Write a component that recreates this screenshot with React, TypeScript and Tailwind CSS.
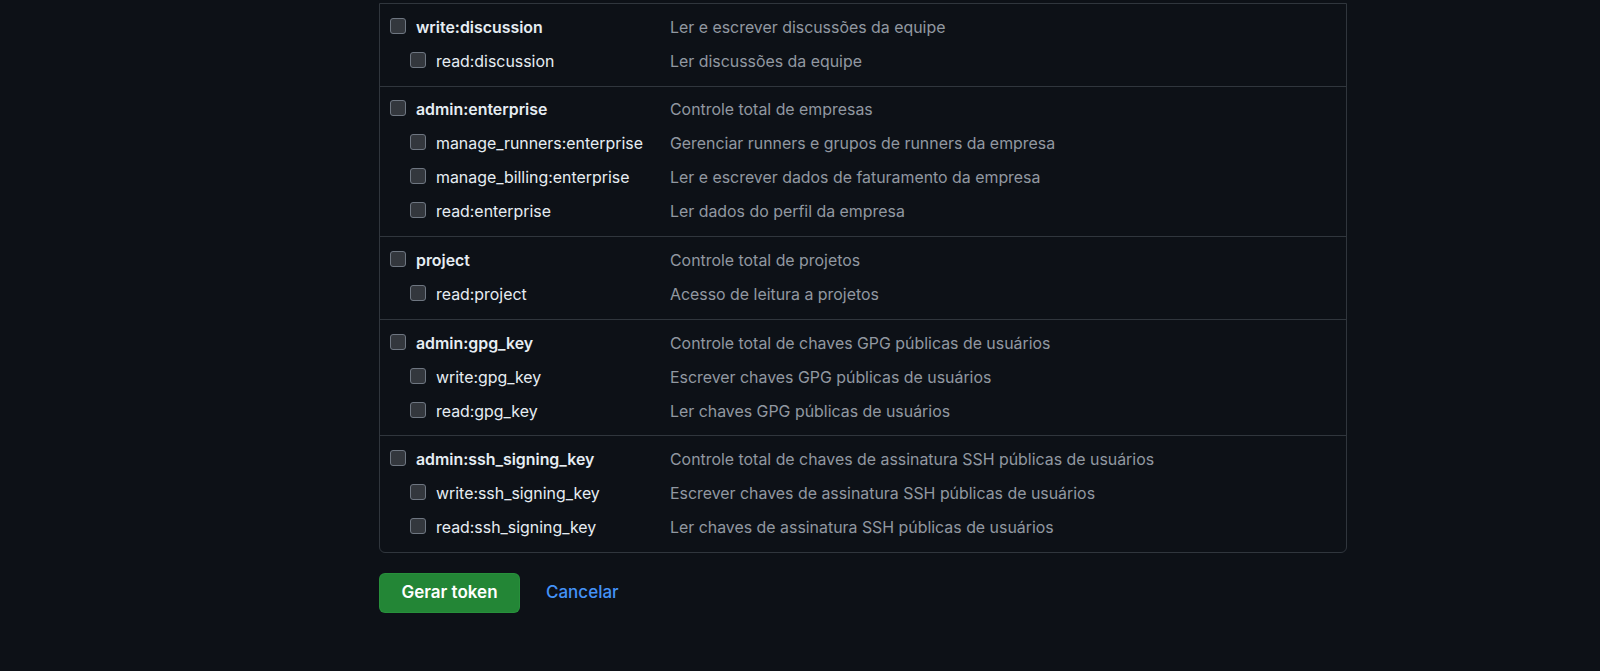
import React from 'react';

type Scope = { name: string; desc: string; children?: Scope[] };

const GROUPS: Scope[] = [
  {
    name: 'write:discussion',
    desc: 'Ler e escrever discussões da equipe',
    children: [{ name: 'read:discussion', desc: 'Ler discussões da equipe' }],
  },
  {
    name: 'admin:enterprise',
    desc: 'Controle total de empresas',
    children: [
      { name: 'manage_runners:enterprise', desc: 'Gerenciar runners e grupos de runners da empresa' },
      { name: 'manage_billing:enterprise', desc: 'Ler e escrever dados de faturamento da empresa' },
      { name: 'read:enterprise', desc: 'Ler dados do perfil da empresa' },
    ],
  },
  {
    name: 'project',
    desc: 'Controle total de projetos',
    children: [{ name: 'read:project', desc: 'Acesso de leitura a projetos' }],
  },
  {
    name: 'admin:gpg_key',
    desc: 'Controle total de chaves GPG públicas de usuários',
    children: [
      { name: 'write:gpg_key', desc: 'Escrever chaves GPG públicas de usuários' },
      { name: 'read:gpg_key', desc: 'Ler chaves GPG públicas de usuários' },
    ],
  },
  {
    name: 'admin:ssh_signing_key',
    desc: 'Controle total de chaves de assinatura SSH públicas de usuários',
    children: [
      { name: 'write:ssh_signing_key', desc: 'Escrever chaves de assinatura SSH públicas de usuários' },
      { name: 'read:ssh_signing_key', desc: 'Ler chaves de assinatura SSH públicas de usuários' },
    ],
  },
];

function Check() {
  return <span className="mt-[7px] h-4 w-4 shrink-0 rounded-[3px] border border-[#6e7681] bg-[#33373d]" />;
}

function Row({ scope, nested }: { scope: Scope; nested?: boolean }) {
  return (
    <div className="flex h-[34px] items-start">
      <div className={`flex w-[280px] shrink-0 items-start gap-[10px] ${nested ? 'pl-[20px]' : ''}`}>
        <Check />
        <span
          className={`whitespace-nowrap leading-[34px] text-[#e6edf3] ${nested ? 'font-normal' : 'font-semibold'}`}
        >
          {scope.name}
        </span>
      </div>
      <span className="whitespace-nowrap leading-[34px] text-[#9198a1]">{scope.desc}</span>
    </div>
  );
}

export default function App() {
  return (
    <div
      className="h-screen overflow-hidden bg-[#0d1117] pt-[3px] text-[15.9px]"
      style={{ fontFamily: 'Inter, "Noto Sans", sans-serif' }}
    >
      <div className="ml-[379px] w-[968px]">
        <div className="rounded-b-md border border-[#30363d]">
          {GROUPS.map((g, i) => (
            <div key={g.name} className={`py-[6.8px] pl-[10px] ${i > 0 ? 'border-t border-[#30363d]' : ''}`}>
              <Row scope={g} />
              {g.children?.map((c) => (
                <Row key={c.name} scope={c} nested />
              ))}
            </div>
          ))}
        </div>

        <div className="mt-[20px] flex items-center gap-[26px]">
          <button className="h-10 w-[141px] rounded-md border border-[#2ea043]/40 bg-[#238636] text-[17px] font-semibold text-white">
            Gerar token
          </button>
          <a className="text-[17px] font-medium text-[#4493f8]">Cancelar</a>
        </div>
      </div>
    </div>
  );
}
